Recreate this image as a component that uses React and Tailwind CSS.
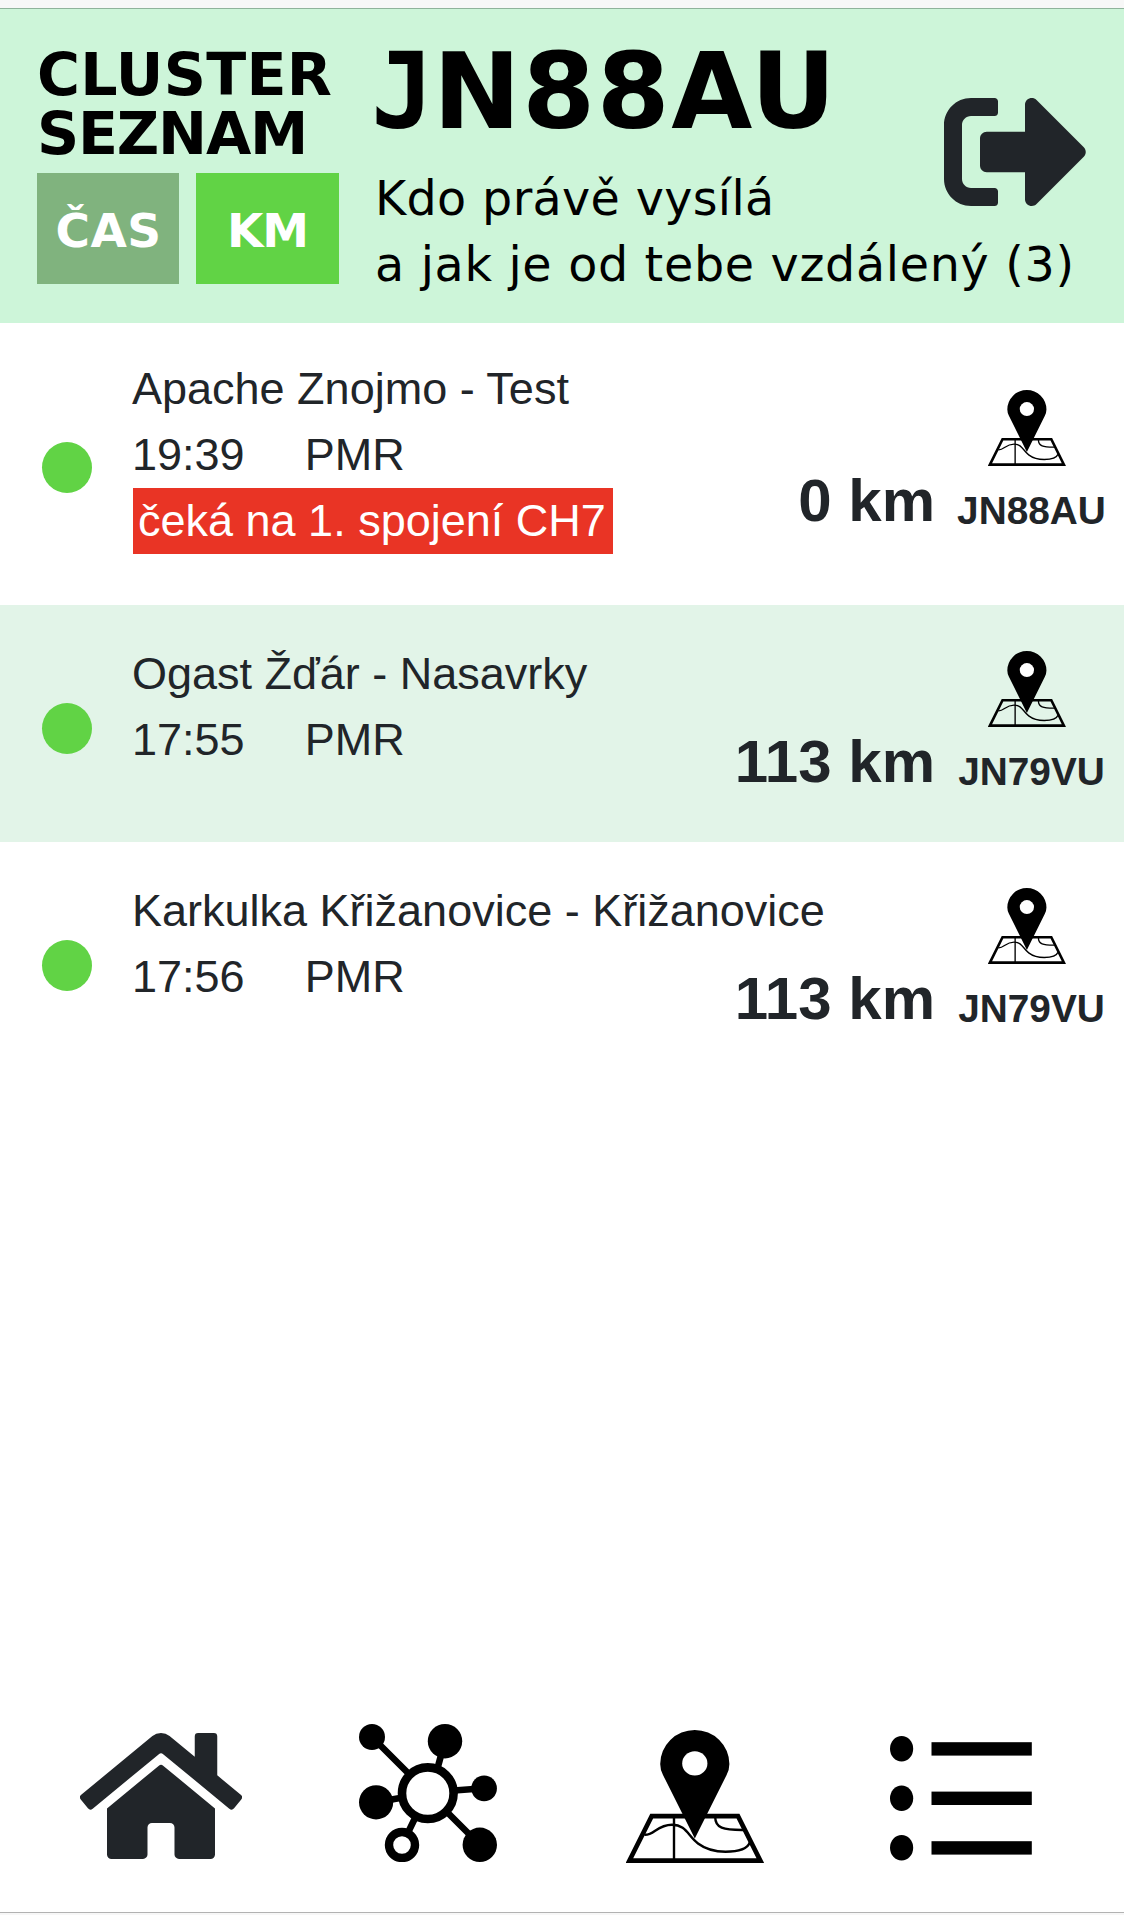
import { FaHome, FaSignOutAlt } from "react-icons/fa";

const stations = [
  {
    name: "Apache Znojmo - Test",
    time: "19:39",
    band: "PMR",
    status: "čeká na 1. spojení CH7",
    distance: "0 km",
    locator: "JN88AU",
  },
  {
    name: "Ogast Žďár - Nasavrky",
    time: "17:55",
    band: "PMR",
    distance: "113 km",
    locator: "JN79VU",
  },
  {
    name: "Karkulka Křižanovice - Křižanovice",
    time: "17:56",
    band: "PMR",
    distance: "113 km",
    locator: "JN79VU",
  },
];

// ---------------------------------------------------------------------------
// Icons
// ---------------------------------------------------------------------------
function MapPinIcon({ className }) {
  return (
    <svg viewBox="0 0 138 133" preserveAspectRatio="none" className={className} fill="none" stroke="#000">
      <path d="M25.7 86.1H112L134.3 130.6H3.4Z" strokeWidth="4.6" />
      <path d="M48 87V130" strokeWidth="2.4" />
      <path
        d="M18.5 104.8C28 105.5 31 94.7 46 94.7C60 94.7 62 106 72 113.5C82 121 92 121.7 99.5 121.7C111 121.7 121 120 123.8 112.5M89.2 87C89.2 98 97 100.2 118 100"
        strokeWidth="2.4"
      />
      <path
        d="M68.8 0A34.6 34 0 0 0 34.2 34Q34.2 39.5 37 45L68.8 108.5L100.6 45Q103.4 39.5 103.4 34A34.6 34 0 0 0 68.8 0Z"
        fill="#000"
        stroke="none"
      />
      <ellipse cx="68.8" cy="33.4" rx="12.6" ry="12.2" fill="#fff" stroke="none" />
    </svg>
  );
}

function NetworkIcon({ className }) {
  return (
    <svg viewBox="0 0 138 138" className={className}>
      <g stroke="#000" strokeWidth="6.6">
        <path d="M13 13L50 50M86 17L78 46M125 64.3L95 66.5M17 78.3L44 73.5M43 121L58 90M121 121L86 86" />
        <circle cx="68.8" cy="69.2" r="25.8" strokeWidth="8.6" fill="#fff" />
        <circle cx="43" cy="121" r="13" strokeWidth="8.4" fill="#fff" />
      </g>
      <circle cx="13" cy="13" r="13" />
      <circle cx="86" cy="17.2" r="17.2" />
      <circle cx="125.1" cy="64.4" r="12.8" />
      <circle cx="17.1" cy="78.3" r="17.1" />
      <circle cx="120.8" cy="120.8" r="17.2" />
    </svg>
  );
}

function ListIcon({ className }) {
  return (
    <svg viewBox="0 0 142 125" className={className}>
      {[12.8, 62.2, 111.8].map((y) => (
        <g key={y}>
          <ellipse cx="11.6" cy={y} rx="11.6" ry="12.8" />
          <rect x="41.5" y={y - 6.6} width="100.3" height="13.4" />
        </g>
      ))}
    </svg>
  );
}

// ---------------------------------------------------------------------------
// Page parts
// ---------------------------------------------------------------------------
function Header({ locator, count }) {
  return (
    <header className="flex h-[315px] shrink-0 border-t border-[#8fb39b] bg-[#cdf5d9] pl-[37px] font-['DejaVu_Sans',sans-serif] text-black">
      <div className="w-[338px] shrink-0 pt-[37px]">
        <h2 className="text-[58.6px] leading-[59px] font-bold whitespace-nowrap">
          <span className="tracking-[0.3px]">CLUSTER</span>
          <br />
          <span className="tracking-[-1.2px]">SEZNAM</span>
        </h2>
        <div className="mt-[9px] flex gap-[17px] text-[47px] font-bold text-white">
          <button className="h-[111px] w-[142px] bg-[#80b37e] pt-1.5 pl-px tracking-[0.5px]">ČAS</button>
          <button className="h-[111px] w-[143px] bg-[#61d345] pt-1.5 tracking-[-1.2px]">KM</button>
        </div>
      </div>
      <div className="w-[569px] shrink-0 pt-[13px]">
        <h1 className="text-[104.8px] leading-[140px] font-bold tracking-[1.6px] whitespace-nowrap">
          {/* the monospace cut has the wide, barred J that stays on the baseline */}
          <span className="mr-1 -ml-1 inline-block w-[58px] font-['DejaVu_Sans_Mono',monospace] tracking-normal">
            {locator[0]}
          </span>
          {locator.slice(1)}
        </h1>
        <p className="mt-1 text-[47.6px] leading-[66px] whitespace-nowrap">
          <span className="tracking-[0.35px]">Kdo právě vysílá</span>
          <br />
          <span className="tracking-[0.68px]">a jak je od tebe vzdálený ({count})</span>
        </p>
      </div>
      <FaSignOutAlt className="mt-[71px] size-[144px] shrink-0 text-[#212529]" />
    </header>
  );
}

function StationRow({ station }) {
  const { name, time, band, status, distance, locator } = station;
  return (
    <li
      className={
        status
          ? "flex h-[282px] pt-[21px] pr-2"
          : "flex h-[237px] pr-2 even:bg-[#e2f4e8]"
      }
    >
      <div className="w-[132px] pt-[98px] pl-[42px]">
        <div className="h-[51px] w-[50px] rounded-[50%] bg-[#61d345]" />
      </div>
      <div className={status ? "w-0 pt-[12px]" : "w-0 pt-[36px]"}>
        <div className="text-[45px] leading-[66px] whitespace-nowrap">
          <p>{name}</p>
          <p className="flex gap-[60px]">
            <span>{time}</span>
            <span>{band}</span>
          </p>
          {status && (
            <p className="ml-px w-[480px] bg-[#e93425] pl-[5px] text-white">{status}</p>
          )}
        </div>
      </div>
      <p className="ml-auto pt-[123px] text-[60px] leading-[68px] font-bold whitespace-nowrap">
        {distance}
      </p>
      <div className="ml-[12px] flex w-[169px] flex-col items-center pt-[46px]">
        <MapPinIcon className="ml-[-10px] h-[76px] w-[78px]" />
        <p className="mt-[22px] text-[38.8px] leading-[46px] font-bold">{locator}</p>
      </div>
    </li>
  );
}

export default function App() {
  return (
    <div className="flex h-[1915px] w-[1124px] flex-col overflow-hidden bg-white pt-2 font-['Liberation_Sans',Arial,sans-serif] text-[#212529] shadow-[inset_0_8px_0_#f7f7f7]">
      <Header locator="JN88AU" count={stations.length} />

      <ul>
        {stations.map((s) => (
          <StationRow key={s.name} station={s} />
        ))}
      </ul>

      <nav className="mt-auto flex h-[188px] items-start pl-[80px]">
        <FaHome className="h-[144px] w-[162px]" />
        <NetworkIcon className="ml-[117px] size-[138px]" />
        <MapPinIcon className="mt-[6px] ml-[129px] h-[133px] w-[138px]" />
        <ListIcon className="mt-[12px] ml-[126px] h-[125px] w-[142px]" />
      </nav>
      <div className="h-[3px] shrink-0 border-t border-[#b2b2b2] bg-[#f7f7f7]" />
    </div>
  );
}
